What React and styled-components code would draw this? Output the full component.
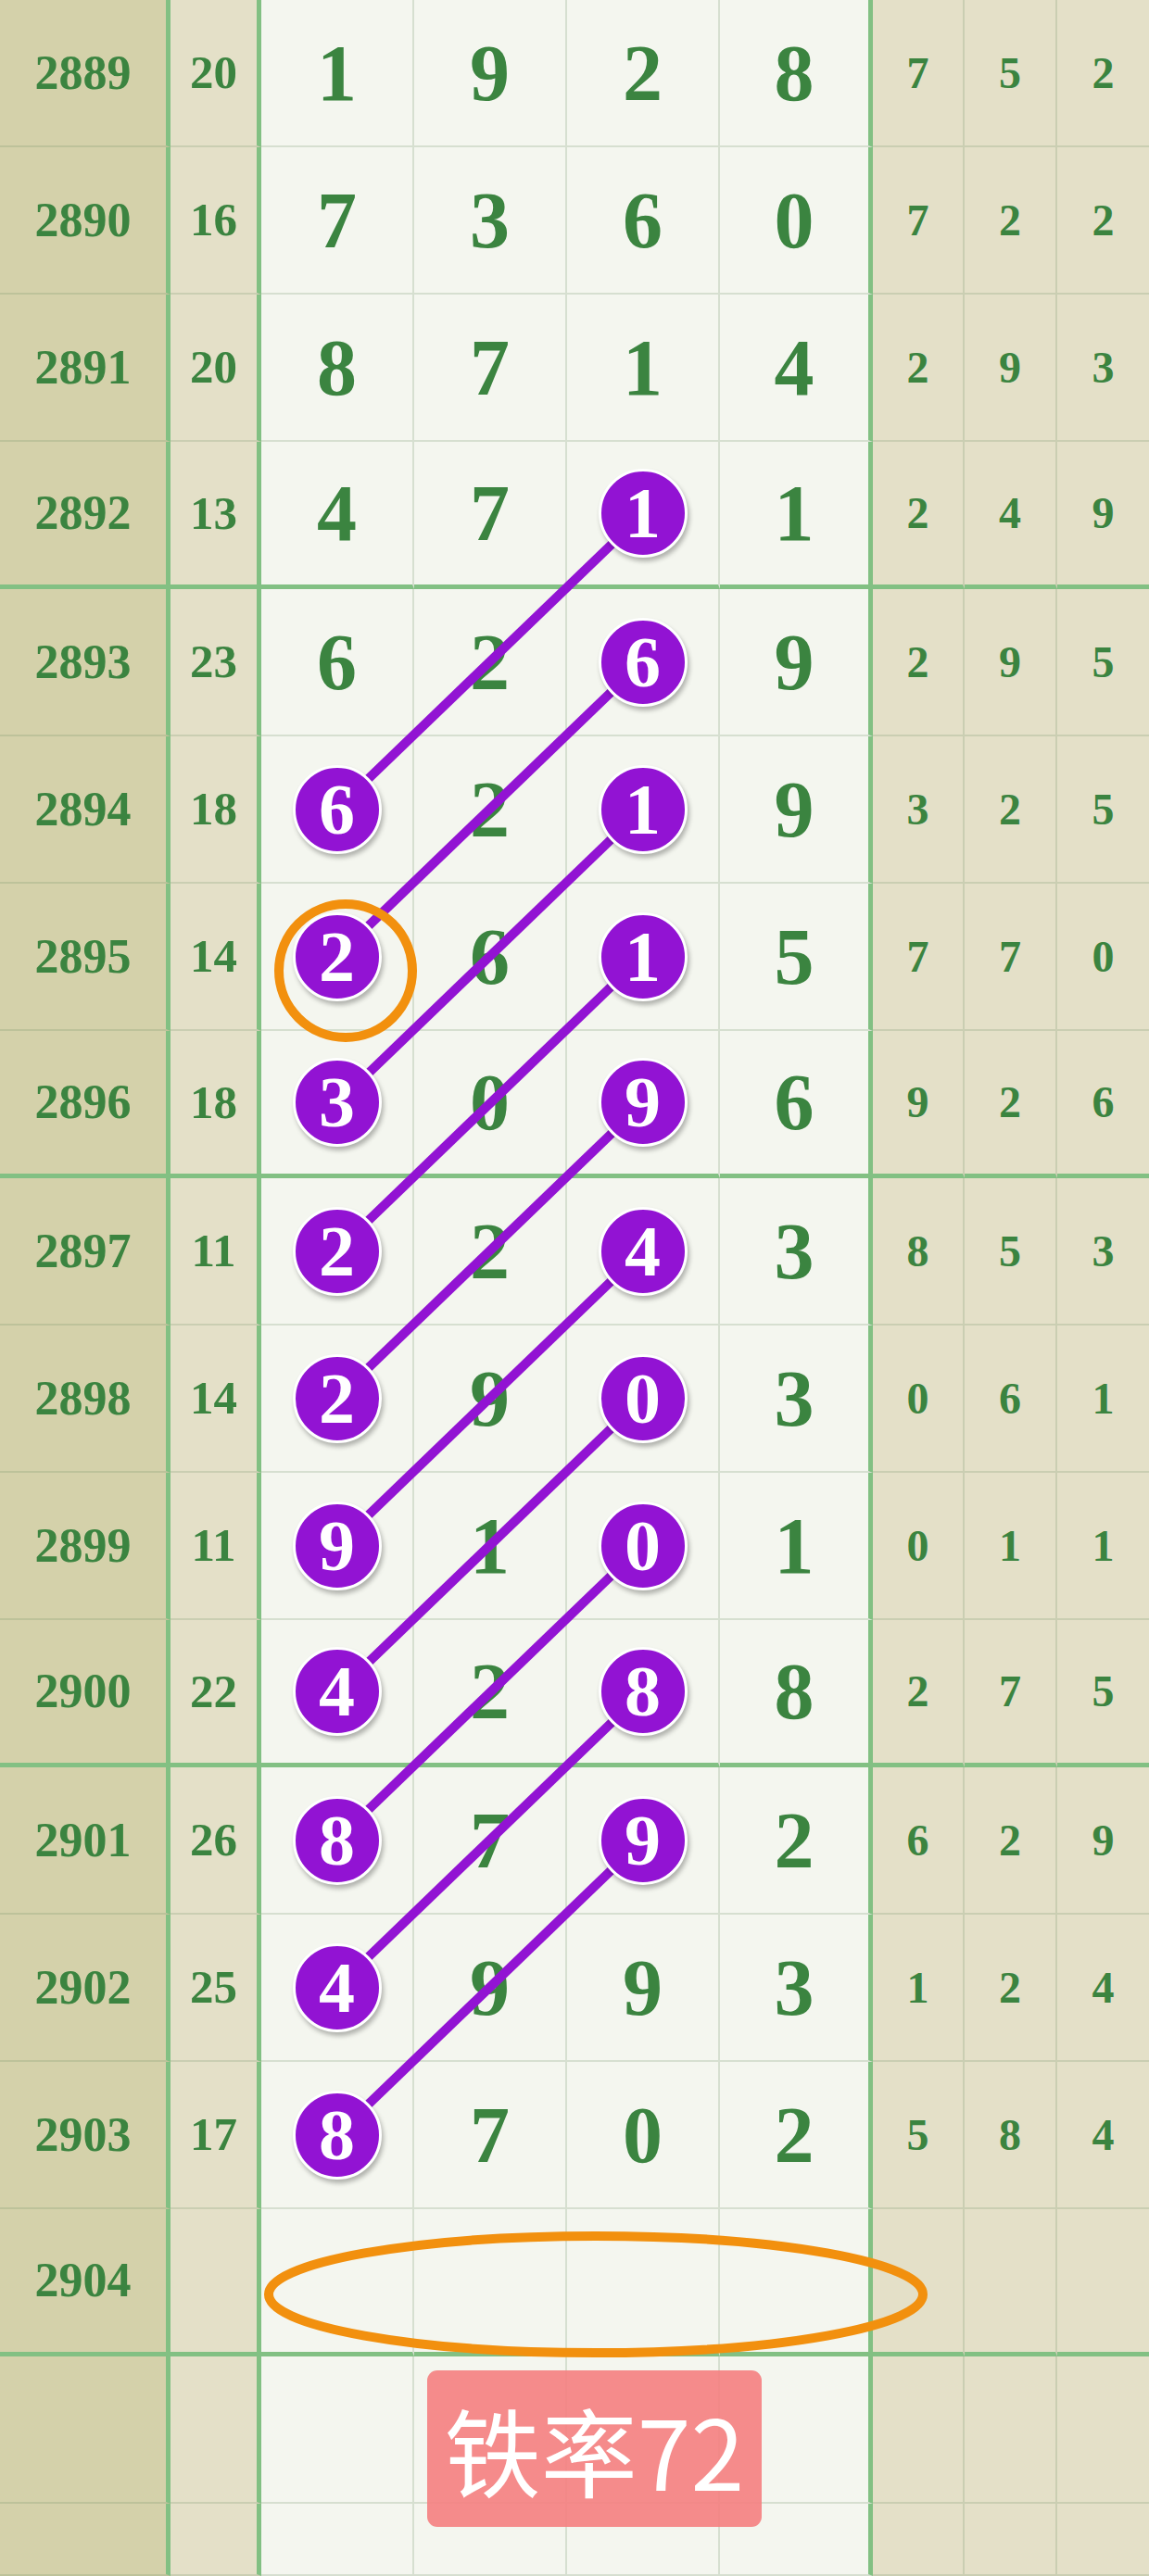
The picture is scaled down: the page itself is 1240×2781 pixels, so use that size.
import React from "react";
import styled, { createGlobalStyle } from "styled-components";

// 走势图 - 两条斜连线 (第3位 -> 第1位, 隔两期)
const GREEN = "#3b8440";
const LINE = "#82c083";
const THIN = "rgba(110, 140, 100, 0.22)";
const PURPLE = "#9213d3";
const ORANGE = "#f2900e";
const ROW_H = 159;
const COLS = [184, 98, 165, 165, 165, 165, 99, 100, 99];

const rows = [
  { no: 2889, sum: 20, d: [1, 9, 2, 8], s: [7, 5, 2], hit: [] },
  { no: 2890, sum: 16, d: [7, 3, 6, 0], s: [7, 2, 2], hit: [] },
  { no: 2891, sum: 20, d: [8, 7, 1, 4], s: [2, 9, 3], hit: [] },
  { no: 2892, sum: 13, d: [4, 7, 1, 1], s: [2, 4, 9], hit: [2] },
  { no: 2893, sum: 23, d: [6, 2, 6, 9], s: [2, 9, 5], hit: [2] },
  { no: 2894, sum: 18, d: [6, 2, 1, 9], s: [3, 2, 5], hit: [0, 2] },
  { no: 2895, sum: 14, d: [2, 6, 1, 5], s: [7, 7, 0], hit: [0, 2] },
  { no: 2896, sum: 18, d: [3, 0, 9, 6], s: [9, 2, 6], hit: [0, 2] },
  { no: 2897, sum: 11, d: [2, 2, 4, 3], s: [8, 5, 3], hit: [0, 2] },
  { no: 2898, sum: 14, d: [2, 9, 0, 3], s: [0, 6, 1], hit: [0, 2] },
  { no: 2899, sum: 11, d: [9, 1, 0, 1], s: [0, 1, 1], hit: [0, 2] },
  { no: 2900, sum: 22, d: [4, 2, 8, 8], s: [2, 7, 5], hit: [0, 2] },
  { no: 2901, sum: 26, d: [8, 7, 9, 2], s: [6, 2, 9], hit: [0, 2] },
  { no: 2902, sum: 25, d: [4, 9, 9, 3], s: [1, 2, 4], hit: [0] },
  { no: 2903, sum: 17, d: [8, 7, 0, 2], s: [5, 8, 4], hit: [0] },
  { no: 2904, sum: "", d: ["", "", "", ""], s: ["", "", ""], hit: [] },
  { no: "", sum: "", d: ["", "", "", ""], s: ["", "", ""], hit: [] },
  { no: "", sum: "", d: ["", "", "", ""], s: ["", "", ""], hit: [] },
];

const colX = (i) => COLS.slice(0, i).reduce((a, b) => a + b, 0) + COLS[i] / 2;
const rowY = (r) => r * ROW_H + ROW_H / 2 - 2;

const GlobalStyle = createGlobalStyle`
  html, body {
    margin: 0;
    padding: 0;
    overflow: hidden;
    background: #f4f6ef;
  }
`;

const Board = styled.div`
  position: relative;
  display: grid;
  grid-template-columns: ${COLS.map((c) => c + "px").join(" ")};
  grid-template-rows: repeat(17, ${ROW_H}px) 78px;
  width: 1240px;
  height: 2781px;
  overflow: hidden;
  font-family: "Liberation Serif", "Times New Roman", serif;
  font-weight: bold;
  color: ${GREEN};
`;

const Cell = styled.div`
  box-sizing: border-box;
  display: flex;
  align-items: center;
  justify-content: center;
  line-height: 1;
  font-size: ${(p) => p.$size}px;
  background: ${(p) => p.$bg};
  border-bottom: ${(p) => (p.$thick ? `5px solid ${LINE}` : `2px solid ${THIN}`)};
  border-right: ${(p) =>
    p.$edge === "thick" ? `5px solid ${LINE}` : p.$edge === "thin" ? `2px solid ${THIN}` : "none"};
`;

const Ball = styled.span`
  position: relative;
  z-index: 2;
  display: flex;
  align-items: center;
  justify-content: center;
  width: 90px;
  height: 90px;
  border-radius: 50%;
  border: 3px solid #fff;
  background: ${PURPLE};
  color: #fff;
  font-size: 78px;
  box-shadow: 2px 4px 5px rgba(0, 0, 0, 0.28);
`;

const Overlay = styled.svg`
  position: absolute;
  left: 0;
  top: 0;
  z-index: ${(p) => p.$z};
  pointer-events: none;
`;

const Badge = styled.div`
  position: absolute;
  left: 461px;
  top: 2559px;
  z-index: 4;
  width: 361px;
  height: 169px;
  display: flex;
  align-items: center;
  justify-content: center;
  border-radius: 11px;
  background: rgba(245, 128, 128, 0.9);
  color: #fff;
  font-family: "Noto Sans CJK SC", "Noto Sans", sans-serif;
  font-weight: 400;
  font-size: 104px;
  line-height: 1;
`;

const links = [];
for (let r = 3; r <= 12; r++) {
  links.push([colX(4), rowY(r), colX(2), rowY(r + 2)]);
}

function Row({ row, index }) {
  const thick = (index + 1) % 4 === 0 && index < 16;
  return (
    <>
      <Cell $bg="#d4d1aa" $size={52} $thick={thick} $edge="thick">
        {row.no}
      </Cell>
      <Cell $bg="#e4e0c8" $size={51} $thick={thick} $edge="thick">
        {row.sum}
      </Cell>
      {row.d.map((v, c) => (
        <Cell key={"d" + c} $bg="#f4f6ef" $size={86} $thick={thick} $edge={c === 3 ? "thick" : "thin"}>
          {row.hit.includes(c) ? <Ball>{v}</Ball> : v}
        </Cell>
      ))}
      {row.s.map((v, c) => (
        <Cell key={"s" + c} $bg="#e4e0c8" $size={48} $thick={thick} $edge={c === 2 ? "none" : "thin"}>
          {v}
        </Cell>
      ))}
    </>
  );
}

export default function App() {
  return (
    <>
      <GlobalStyle />
      <Board>
        {rows.map((row, i) => (
          <Row key={i} row={row} index={i} />
        ))}
        <Overlay $z={1} width="1240" height="2781">
          {links.map(([x1, y1, x2, y2], i) => (
            <line key={i} x1={x1} y1={y1} x2={x2} y2={y2} stroke={PURPLE} strokeWidth="10" />
          ))}
        </Overlay>
        <Overlay $z={3} width="1240" height="2781">
          <circle cx="373" cy="1048" r="72" fill="none" stroke={ORANGE} strokeWidth="10" />
          <ellipse cx="643" cy="2477" rx="353" ry="63" fill="none" stroke={ORANGE} strokeWidth="10" />
        </Overlay>
        <Badge>铁率72</Badge>
      </Board>
    </>
  );
}
